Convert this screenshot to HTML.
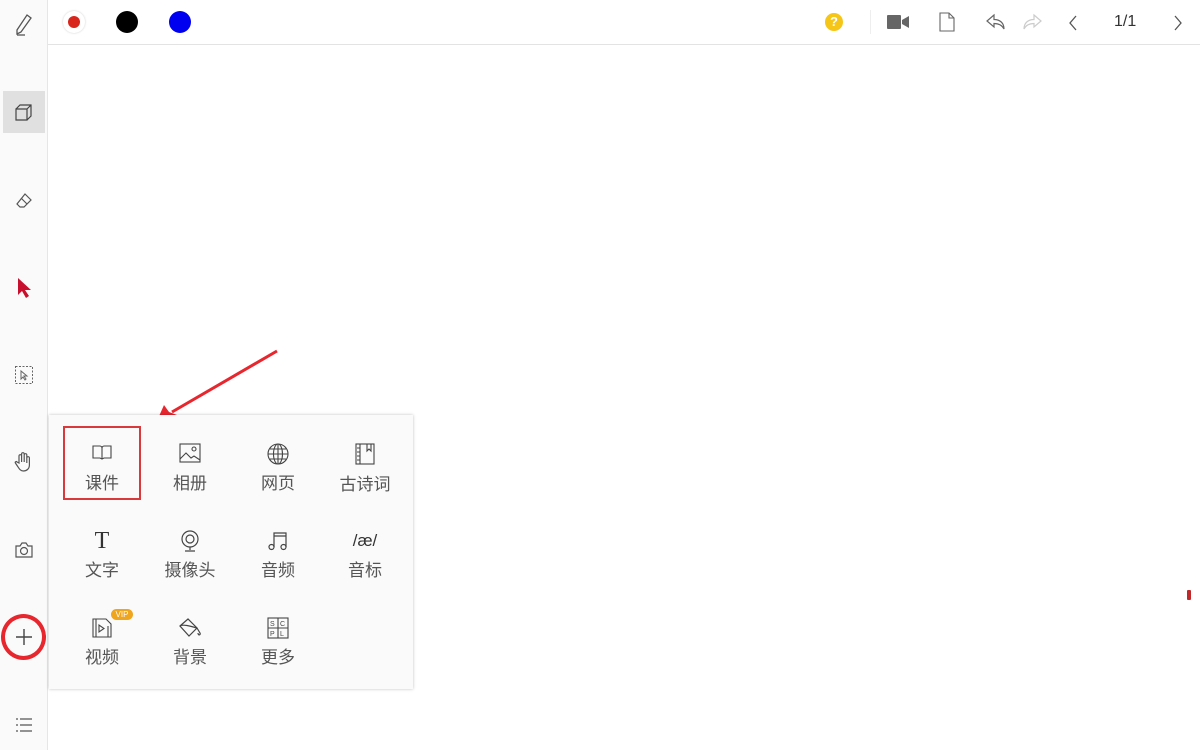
<!DOCTYPE html>
<html><head><meta charset="utf-8"><style>
body{margin:0;width:1200px;height:750px;position:relative;background:#fff;font-family:"Liberation Sans","Noto Sans CJK SC",sans-serif;overflow:hidden}
.side{position:absolute;left:0;top:0;width:47px;height:750px;background:#fafafa;border-right:1px solid #e6e6e6}
.top{position:absolute;left:48px;top:0;width:1152px;height:44px;border-bottom:1px solid #e3e3e3;background:#fff}
.ic{position:absolute}
.panel{position:absolute;left:49px;top:415px;width:364px;height:274px;background:#fafafa;box-shadow:0 0 3px rgba(0,0,0,.25)}
.it{position:absolute;width:80px;text-align:center;font-size:17px;color:#555}
.it svg{display:block;margin:0 auto}
.lbl{position:absolute;left:0;width:80px;top:26px;text-align:center}
</style></head><body>
<div class="side">
<svg class="ic" style="left:14px;top:13px" width="20" height="24" viewBox="0 0 20 24" fill="none" stroke="#555" stroke-width="1.3"><path d="M13 2l4 3-10 14-4 2 0-4z"/><path d="M3 22h8"/></svg>
<div style="position:absolute;left:3px;top:91px;width:42px;height:42px;background:#e0e0e0"></div>
<svg class="ic" style="left:14px;top:103px" width="20" height="20" viewBox="0 0 20 20" fill="none" stroke="#444" stroke-width="1.2"><path d="M2 6h11v11H2zM2 6l4-4h11v11l-4 4M13 6l4-4"/></svg>
<svg class="ic" style="left:14px;top:191px" width="20" height="20" viewBox="0 0 20 20" fill="none" stroke="#555" stroke-width="1.2"><path d="M11 3l6 6-7 7H6l-3-3zM7 7l6 6"/></svg>
<svg class="ic" style="left:16px;top:277px" width="16" height="22" viewBox="0 0 16 22"><path d="M2 1v17l4-4 4 7 3-2-4-6h6z" fill="#c8102e"/></svg>
<svg class="ic" style="left:14px;top:365px" width="20" height="20" viewBox="0 0 20 20" fill="none" stroke="#666" stroke-width="1" stroke-dasharray="2 1.5"><rect x="1.5" y="1.5" width="17" height="17"/><path d="M7 6v8l2-2 2 3 1-1-2-3h3z" stroke-dasharray="none"/></svg>
<svg class="ic" style="left:13px;top:451px" width="22" height="22" viewBox="0 0 22 22" fill="none" stroke="#555" stroke-width="1.2"><path d="M6 12V5a1.3 1.3 0 012.6 0v6V3a1.3 1.3 0 012.6 0v8V4a1.3 1.3 0 012.6 0v8V7a1.3 1.3 0 012.6 0v7c0 4-3 6-6 6-3 0-4-2-6-5l-2-3c-.6-1 .8-2 1.6-1z"/></svg>
<svg class="ic" style="left:14px;top:541px" width="20" height="18" viewBox="0 0 20 18" fill="none" stroke="#555" stroke-width="1.2"><path d="M2 5h4l2-3h4l2 3h4v11H2z"/><circle cx="10" cy="10" r="3.5"/></svg>
<div style="position:absolute;left:1px;top:614px;width:37px;height:38px;border:4px solid #e8262e;border-radius:50%"></div>
<svg class="ic" style="left:14px;top:627px" width="20" height="20" viewBox="0 0 20 20" stroke="#444" stroke-width="1.4"><path d="M10 2v16M2 10h16"/></svg>
<svg class="ic" style="left:15px;top:716px" width="18" height="18" viewBox="0 0 18 18" stroke="#555" stroke-width="1.2"><path d="M1 3h2M5 3h12M1 9h2M5 9h12M1 15h2M5 15h12"/></svg>
</div>
<div class="top">
<div style="position:absolute;left:15px;top:11px;width:22px;height:22px;border-radius:50%;background:#fff;box-shadow:0 0 2px #ccc"></div>
<div style="position:absolute;left:20px;top:16px;width:12px;height:12px;border-radius:50%;background:#d9261c"></div>
<div style="position:absolute;left:68px;top:11px;width:22px;height:22px;border-radius:50%;background:#000"></div>
<div style="position:absolute;left:121px;top:11px;width:22px;height:22px;border-radius:50%;background:#0000f0"></div>
<div style="position:absolute;left:777px;top:13px;width:18px;height:18px;border-radius:50%;background:#f5c518;color:#fff;font-size:13px;font-weight:bold;text-align:center;line-height:18px">?</div>
<div style="position:absolute;left:822px;top:10px;width:1px;height:24px;background:#eee"></div>
<svg class="ic" style="left:838px;top:14px" width="24" height="16" viewBox="0 0 24 16"><rect x="1" y="1" width="14" height="14" rx="1" fill="#666"/><path d="M16 6l7-4v12l-7-4z" fill="#666"/></svg>
<svg class="ic" style="left:891px;top:12px" width="16" height="20" viewBox="0 0 16 20" fill="none" stroke="#666" stroke-width="1.1"><path d="M1 1h9l5 5v13H1zM10 1v5h5"/></svg>
<svg class="ic" style="left:937px;top:13px" width="22" height="18" viewBox="0 0 22 18" fill="none" stroke="#666" stroke-width="1.2"><path d="M9 2L2 8l7 6v-3.5c5 0 8 1.5 10 5.5 0-6-4-9.5-10-9.5z"/></svg>
<svg class="ic" style="left:973px;top:13px" width="22" height="18" viewBox="0 0 22 18" fill="none" stroke="#ccc" stroke-width="1.2"><path d="M13 2l7 6-7 6v-3.5c-5 0-8 1.5-10 5.5 0-6 4-9.5 10-9.5z"/></svg>
<svg class="ic" style="left:1019px;top:14px" width="12" height="18" viewBox="0 0 12 18" fill="none" stroke="#555" stroke-width="1.3"><path d="M9 2L3 9l6 7"/></svg>
<div style="position:absolute;left:1066px;top:13px;font-size:16px;color:#333">1/1</div>
<svg class="ic" style="left:1124px;top:14px" width="12" height="18" viewBox="0 0 12 18" fill="none" stroke="#555" stroke-width="1.3"><path d="M3 2l6 7-6 7"/></svg>
</div>
<svg class="ic" style="left:150px;top:345px" width="135" height="85" viewBox="150 345 135 85"><path d="M277 351L172 412" stroke="#e8262e" stroke-width="3"/><path d="M156 423l8-18 5 7 8 3z" fill="#e8262e"/></svg>
<div class="panel">
<div style="position:absolute;left:14px;top:11px;width:74px;height:70px;border:2px solid #d9393b"></div>
<div class="it" style="left:13px;top:28px"><svg width="22" height="20" viewBox="0 0 22 20" fill="none" stroke="#444" stroke-width="1.1"><path d="M2 3h7c1 0 2 1 2 2 0-1 1-2 2-2h7v12h-7l-2 1-2-1H2zM11 5v11"/></svg><div class="lbl">课件</div></div>
<div class="it" style="left:101px;top:28px"><svg width="22" height="20" viewBox="0 0 22 20" fill="none" stroke="#444" stroke-width="1.1"><rect x="1" y="1" width="20" height="18"/><circle cx="15" cy="6" r="2"/><path d="M1 16l6-6 5 5 3-2 6 4"/></svg><div class="lbl">相册</div></div>
<div class="it" style="left:189px;top:28px"><svg width="22" height="22" viewBox="0 0 22 22" fill="none" stroke="#444" stroke-width="1.1"><circle cx="11" cy="11" r="10"/><ellipse cx="11" cy="11" rx="4.5" ry="10"/><path d="M1 11h20M3 6h16M3 16h16M11 1v20"/></svg><div class="lbl">网页</div></div>
<div class="it" style="left:276px;top:28px"><svg width="20" height="22" viewBox="0 0 20 22" fill="none" stroke="#444" stroke-width="1.1"><rect x="1" y="1" width="18" height="20"/><path d="M5 1v20M2 5h3M2 9h3M2 13h3M2 17h3M12 1v7l2-2 2 2V1"/></svg><div class="lbl" style="top:27px">古诗词</div></div>
<div class="it" style="left:13px;top:115px"><div style="font-family:'Liberation Serif',serif;font-size:24px;color:#333;height:22px;line-height:22px">T</div><div class="lbl">文字</div></div>
<div class="it" style="left:101px;top:115px"><svg width="22" height="22" viewBox="0 0 22 22" fill="none" stroke="#444" stroke-width="1.2"><circle cx="11" cy="9" r="8"/><circle cx="11" cy="9" r="4"/><path d="M11 17v3M6 21h10"/></svg><div class="lbl">摄像头</div></div>
<div class="it" style="left:189px;top:115px"><svg width="22" height="22" viewBox="0 0 22 22" fill="none" stroke="#444" stroke-width="1.2"><path d="M7 17V3h12v14M7 6h12"/><circle cx="4.5" cy="17" r="2.5"/><circle cx="16.5" cy="17" r="2.5"/></svg><div class="lbl">音频</div></div>
<div class="it" style="left:276px;top:115px"><div style="font-size:17px;color:#333;height:22px;line-height:22px">/æ/</div><div class="lbl">音标</div></div>
<div class="it" style="left:13px;top:202px"><svg width="22" height="22" viewBox="0 0 22 22" fill="none" stroke="#444" stroke-width="1.1"><path d="M2 2h13l5 5v13H2zM5 2v18M17 9v11"/><path d="M8 8v7l5-3.5z"/></svg><div class="lbl">视频</div></div>
<div style="position:absolute;left:62px;top:194px;width:22px;height:11px;border-radius:6px;background:#f0a51e;color:#fff;font-size:8px;line-height:11px;text-align:center">VIP</div>
<div class="it" style="left:101px;top:202px"><svg width="26" height="24" viewBox="0 0 26 24" fill="none" stroke="#444" stroke-width="1.2"><path d="M3 9l8-7 9 9-8 8zM3 9c3-2 10 0 17 2M20 11l3 5c1 2-2 3-2 0"/></svg><div class="lbl" style="top:26px">背景</div></div>
<div class="it" style="left:189px;top:202px"><svg width="22" height="22" viewBox="0 0 22 22" fill="none" stroke="#444" stroke-width="1.1"><rect x="1" y="1" width="20" height="20"/><path d="M11 1v20M1 11h20"/><text x="3" y="9" font-size="7" fill="#444" stroke="none">S</text><text x="13" y="9" font-size="7" fill="#444" stroke="none">C</text><text x="3" y="19" font-size="7" fill="#444" stroke="none">P</text><text x="13" y="19" font-size="7" fill="#444" stroke="none">L</text></svg><div class="lbl">更多</div></div>
</div>
<div style="position:absolute;left:1187px;top:590px;width:4px;height:10px;background:#c0282a;border-radius:1px"></div>
</body></html>
